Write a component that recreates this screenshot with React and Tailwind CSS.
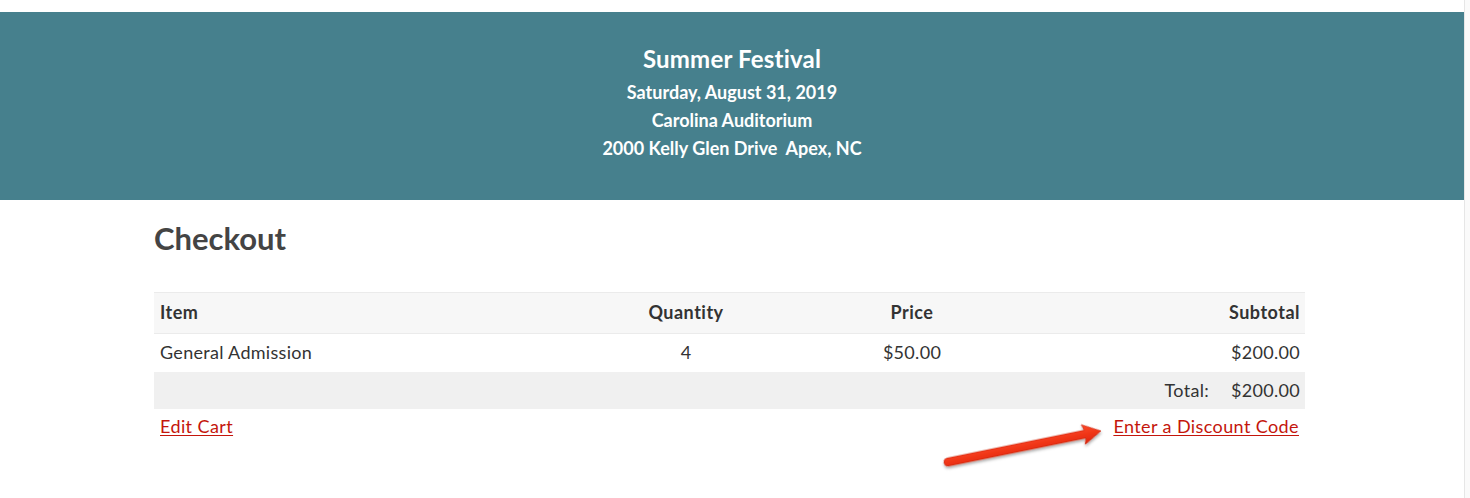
import React from "react";

function Arrow() {
  return (
    <svg
      className="absolute left-[930px] top-[405px] pointer-events-none"
      width="190"
      height="80"
      viewBox="0 0 190 80"
    >
      <defs>
        <linearGradient id="ag" x1="0" y1="0" x2="0" y2="1">
          <stop offset="0" stopColor="#ff4a26" />
          <stop offset="1" stopColor="#e0230a" />
        </linearGradient>
        <filter id="sh" x="-20%" y="-50%" width="140%" height="200%">
          <feDropShadow dx="0" dy="2" stdDeviation="1.6" floodColor="#000" floodOpacity="0.35" />
        </filter>
      </defs>
      <g transform="translate(18 57) rotate(-11.5)" filter="url(#sh)">
        <path
          d="M0 -4 L140 -4 L138 -10 L156 0 L138 10 L140 4 L0 4 A4 4 0 0 1 0 -4 Z"
          fill="url(#ag)"
          stroke="#c81c06"
          strokeWidth="0.6"
          strokeLinejoin="round"
        />
      </g>
    </svg>
  );
}

export default function App() {
  return (
    <div
      className="relative w-[1470px] h-[498px] overflow-hidden bg-white flex"
      style={{ fontFamily: "Lato, 'Open Sans', sans-serif" }}
    >
      <div className="w-[1464px] pt-[12px]">
        <header className="h-[188px] bg-[#46808d] flex flex-col items-center pt-[31px] text-white font-bold">
          <div className="text-[24px] leading-[32px] tracking-[0.2px]">Summer Festival</div>
          <div className="mt-[3px] text-[18px] leading-[28px]">Saturday, August 31, 2019</div>
          <div className="text-[18px] leading-[28px]">Carolina Auditorium</div>
          <div className="text-[18px] leading-[28px] whitespace-pre">2000 Kelly Glen Drive  Apex, NC</div>
        </header>

        <main className="ml-[154px] w-[1151px] text-[#333]">
          <h1 className="mt-[20px] text-[31px] leading-[36px] font-bold text-[#444]">Checkout</h1>

          <div className="mt-[36px] text-[18px]">
            <div className="grid grid-cols-[419px_226px_226px_1fr] h-[42px] items-center bg-[#f7f7f7] border-y border-[#ebebeb] font-bold text-[18px] tracking-[0.5px] pb-[2px]">
              <div className="pl-[6px]">Item</div>
              <div className="text-center">Quantity</div>
              <div className="text-center">Price</div>
              <div className="text-right pr-[5px]">Subtotal</div>
            </div>
            <div className="grid grid-cols-[419px_226px_226px_1fr] h-[38px] items-center tracking-[0.3px] pb-[1px]">
              <div className="pl-[6px]">General Admission</div>
              <div className="text-center">4</div>
              <div className="text-center">$50.00</div>
              <div className="text-right pr-[5px]">$200.00</div>
            </div>
            <div className="flex h-[37px] items-center justify-end bg-[#f0f0f0] pr-[5px] gap-[22px] tracking-[0.3px] pb-[1px]">
              <span>Total:</span>
              <span>$200.00</span>
            </div>
            <div className="flex justify-between items-center h-[34px] px-[6px] text-[18px] tracking-[0.4px] text-[#c4160c]">
              <a href="#" className="underline underline-offset-[2px]">Edit Cart</a>
              <a href="#" className="underline underline-offset-[2px]">Enter a Discount Code</a>
            </div>
          </div>
        </main>
      </div>
      <div className="w-[6px] border-l border-[#e6e6e6] bg-[#fafafa]" />
      <Arrow />
    </div>
  );
}
